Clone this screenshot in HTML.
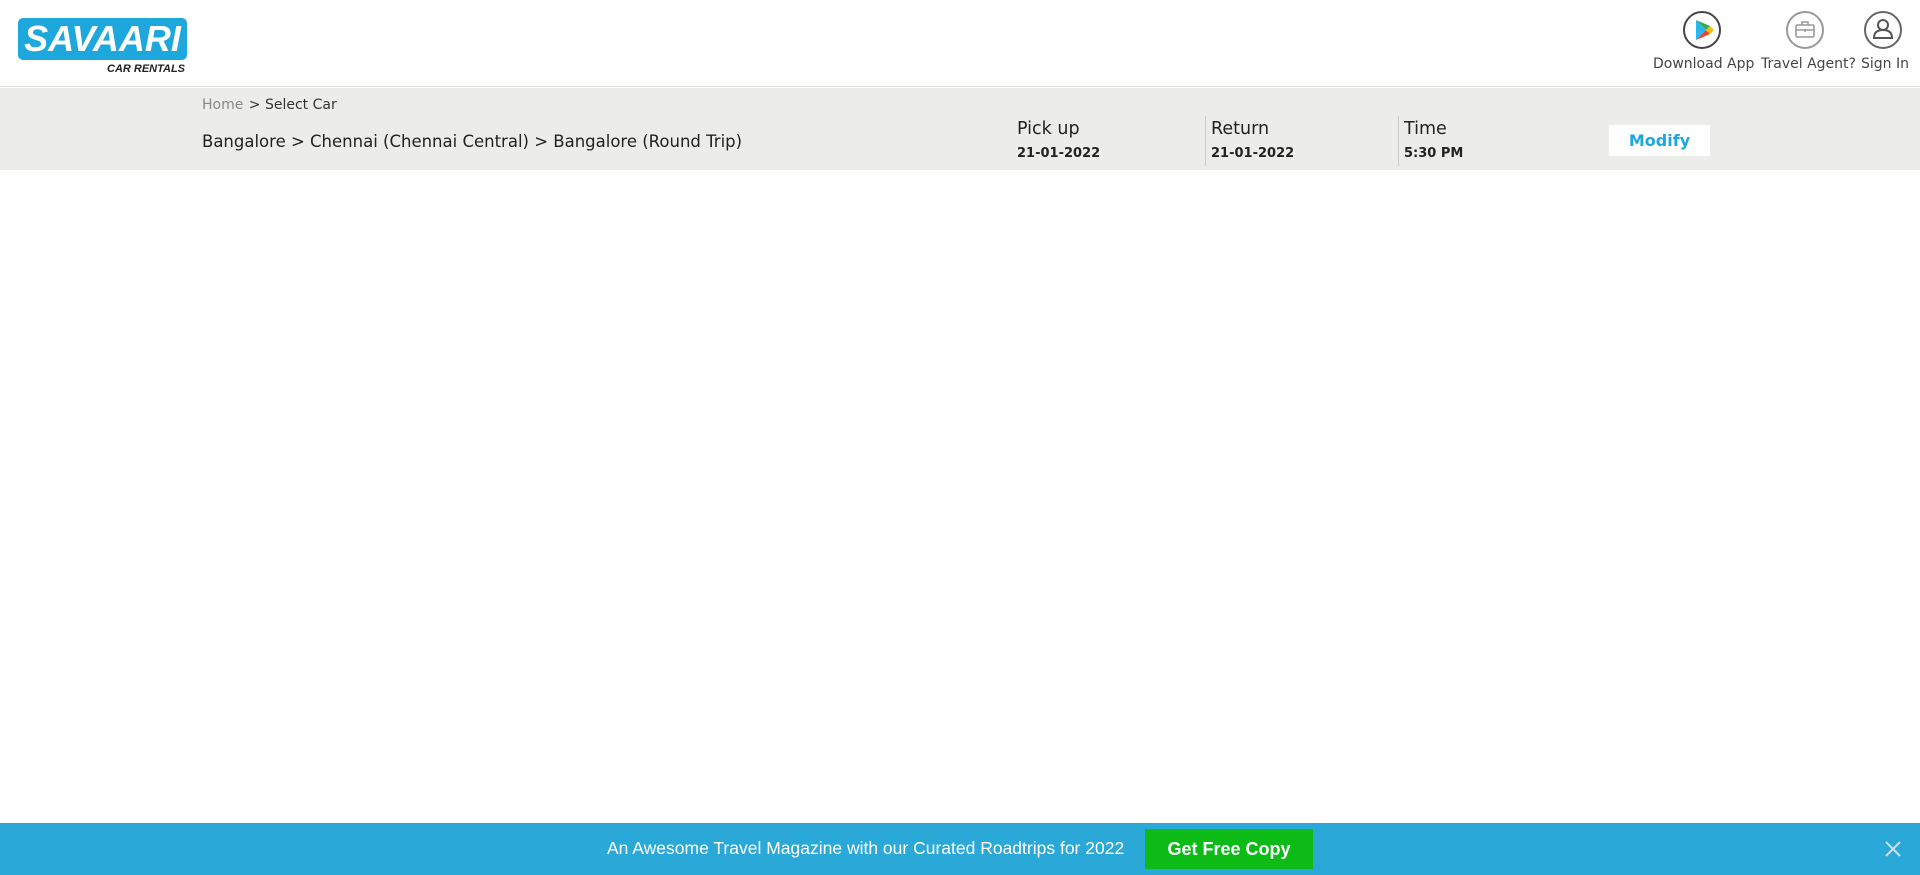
<!DOCTYPE html>
<html><head><meta charset="utf-8"><style>
*{margin:0;padding:0;box-sizing:border-box}
body{width:1920px;height:875px;background:#fff;font-family:"DejaVu Sans","Liberation Sans",sans-serif;position:relative;overflow:hidden;color:#222}
.hdr{height:87px;border-bottom:1px solid #ddd;position:relative}
.logo{position:absolute;left:18px;top:18px;width:169px;height:42px;background:#1ea7dc;border-radius:5px;color:#fff;font:italic bold 36px "Liberation Sans",sans-serif;text-align:center;line-height:42px;letter-spacing:0px}
.logo2{position:absolute;left:107px;top:63px;font:italic bold 11px "Liberation Sans",sans-serif;color:#222}
.ic{position:absolute;top:11px;width:38px;height:38px;border:2px solid #555;border-radius:50%}
.lab{position:absolute;top:56px;font-size:14px;color:#444;white-space:nowrap}
.bar{position:absolute;top:88px;left:0;width:1920px;height:82px;background:#ececea}
.t{position:absolute;white-space:nowrap}
.div{position:absolute;top:116px;width:1px;height:50px;background:#ccc}
.foot{position:absolute;left:0;top:823px;width:1920px;height:52px;background:#2aa8d8}
</style></head><body>
<div class="hdr">
<div class="logo">SAVAARI</div>
<div class="logo2">CAR RENTALS</div>
<div class="ic" style="left:1683px;border-color:#444">
<svg width="34" height="34" viewBox="0 0 34 34" style="position:absolute;left:0;top:0"><path d="M11 7 L11 27 L21 17Z" fill="#2ab7f0"/><path d="M11 7 L21 17 L25 13Z" fill="#34a853"/><path d="M11 27 L21 17 L25 21Z" fill="#ea4335"/><path d="M21 17 L25 13 L29 17 L25 21Z" fill="#fbbc04"/></svg></div>
<div class="ic" style="left:1786px;border-color:#999">
<svg width="34" height="34" viewBox="0 0 34 34" style="position:absolute;left:0;top:0" fill="none" stroke="#999" stroke-width="1.6"><rect x="8" y="12" width="18" height="12" rx="1.5"/><path d="M14 12v-3h6v3M8 17h18M17 16v3"/></svg></div>
<div class="ic" style="left:1864px;border-color:#666">
<svg width="34" height="34" viewBox="0 0 34 34" style="position:absolute;left:0;top:0" fill="none" stroke="#555" stroke-width="2"><circle cx="17" cy="12" r="5"/><path d="M8 25c0-6 4-8 9-8s9 2 9 8z"/></svg></div>
<div class="lab" style="left:1653px">Download App</div>
<div class="lab" style="left:1761px">Travel Agent?</div>
<div class="lab" style="left:1861px">Sign In</div>
</div>
<div class="bar"></div>
<div class="t" style="left:202px;top:97px;font-size:14px;color:#888">Home <span style="color:#333;margin-left:1px">&gt; Select Car</span></div>
<div class="t" style="left:202px;top:132px;font-size:16.5px;color:#222">Bangalore &gt; Chennai (Chennai Central) &gt; Bangalore (Round Trip)</div>
<div class="t" style="left:1017px;top:119px;font-size:17.5px">Pick up</div>
<div class="t" style="left:1017px;top:146px;font-size:13px;font-weight:bold">21-01-2022</div>
<div class="div" style="left:1205px"></div>
<div class="t" style="left:1211px;top:119px;font-size:17.5px">Return</div>
<div class="t" style="left:1211px;top:146px;font-size:13px;font-weight:bold">21-01-2022</div>
<div class="div" style="left:1398px"></div>
<div class="t" style="left:1404px;top:119px;font-size:17.5px">Time</div>
<div class="t" style="left:1404px;top:146px;font-size:13px;font-weight:bold">5:30 PM</div>
<div class="t" style="left:1609px;top:125px;width:101px;height:31px;background:#fff;color:#1ea7dc;font-weight:bold;font-size:16px;text-align:center;line-height:31px">Modify</div>
<div class="foot">
<div class="t" style="left:607px;top:15px;font:17.5px 'Liberation Sans',sans-serif;color:#fff">An Awesome Travel Magazine with our Curated Roadtrips for 2022</div>
<div class="t" style="left:1145px;top:6px;width:168px;height:40px;background:#0dbb17;color:#fff;font:bold 18px 'Liberation Sans',sans-serif;text-align:center;line-height:40px">Get Free Copy</div>
<svg width="18" height="18" viewBox="0 0 18 18" style="position:absolute;left:1884px;top:17px" stroke="#cde" stroke-width="2"><path d="M2 2L16 16M16 2L2 16"/></svg>
</div>
</body></html>
